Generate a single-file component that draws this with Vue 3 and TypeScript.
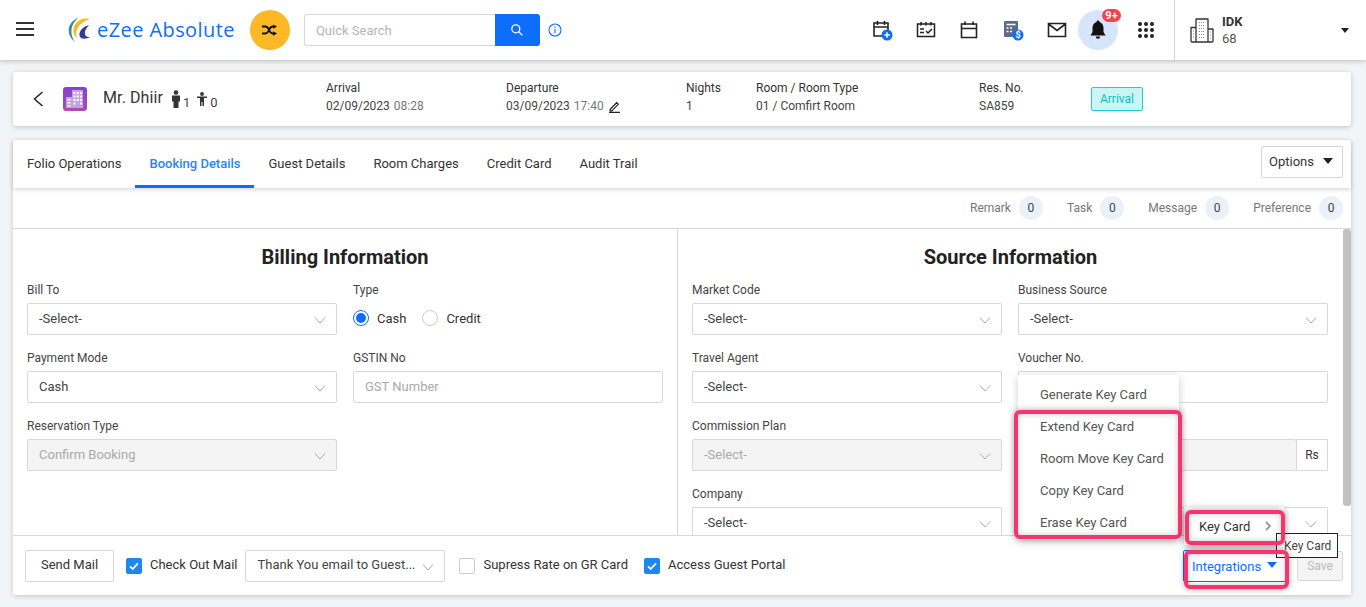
<script setup lang="ts">
const tabs = ['Folio Operations', 'Booking Details', 'Guest Details', 'Room Charges', 'Credit Card', 'Audit Trail']
const counts = ['Remark', 'Task', 'Message', 'Preference']
const keyItems = ['Generate Key Card', 'Extend Key Card', 'Room Move Key Card', 'Copy Key Card', 'Erase Key Card']
</script>

<template>
  <div class="page">
    <header class="topbar">
      <button class="burger"><span></span><span></span><span></span></button>
      <svg class="logo" width="28" height="28" viewBox="0 0 28 28">
        <path d="M12 2C3 5-2 17 9 26 3 18 5 8 12 2Z" fill="#2f8f9d" />
        <path d="M24 3C14 0 5 9 8 18c1 2 2 3 3 4C8 15 13 6 24 3Z" fill="#f7b824" />
        <path d="M23 9c-8 2-12 9-8 13 2 1 6 1 9-1-5 1-8-5-1-12Z" fill="#2f3f8f" />
      </svg>
      <span class="brand">eZee Absolute</span>
      <span class="shuffle">
        <svg width="15" height="12" viewBox="0 0 16 12" fill="#111">
          <path d="M0 2.300h3.500c2 0 3 1.200 4 3.700s2 3.700 4 3.700H13M0 9.700h3.500c2 0 3-1.200 4-3.700s2-3.700 4-3.700H13" fill="none" stroke="#111" stroke-width="2" />
          <path d="m12 0 4 2.300-4 2.300zM12 7.400l4 2.300-4 2.300z" />
        </svg>
      </span>
      <div class="search">
        <input class="search-input" placeholder="Quick Search" />
        <button class="search-btn">
          <svg width="14" height="14" viewBox="0 0 14 14" fill="none" stroke="#fff" stroke-width="1.300"><circle cx="5.800" cy="5.800" r="4" /><path d="m8.800 8.800 3.600 3.600" /></svg>
        </button>
      </div>
      <svg class="info" width="14" height="14" viewBox="0 0 14 14" fill="none" stroke="#0d6efd" stroke-width="1.100"><circle cx="7" cy="7" r="6" /><path d="M7 6v4.200M7 3.600v1.200" /></svg>

      <div class="top-icons">
        <svg class="ti" width="22" height="22" viewBox="0 0 22 22" fill="none" stroke="#222" stroke-width="1.600"><path d="M3 4h14v13H3zM3 8h14M6.500 2v4M13.500 2v4" /><circle cx="16" cy="16" r="5.500" fill="#0d6efd" stroke="none" /><path d="M16 13.200v5.600M13.200 16h5.600" stroke="#fff" stroke-width="1.500" /></svg>
        <svg class="ti" width="20" height="20" viewBox="0 0 20 20" fill="none" stroke="#222" stroke-width="1.500"><path d="M1.500 4h17v12.500h-17zM5 2v3.500M10 2v3.500M15 2v3.500M4 9h4M4 12.500h4M10 11l2 2 4-4" /></svg>
        <svg class="ti" width="20" height="20" viewBox="0 0 20 20" fill="none" stroke="#222" stroke-width="1.600"><path d="M2.500 4h15v13.500h-15zM2.500 8.500h15M6 1.500V5M14 1.500V5" /></svg>
        <svg class="ti" width="22" height="22" viewBox="0 0 22 22"><rect x="2" y="2" width="14" height="16" rx="1" fill="#5b6c8a" /><path d="M4.500 5.500h9M4.500 9h2M8 9h2M4.500 12.500h2M8 12.500h2" stroke="#fff" stroke-width="1.400" /><circle cx="16" cy="16" r="5.500" fill="#0d6efd" /><text x="16" y="19" text-anchor="middle" class="dollar">$</text></svg>
        <svg class="ti" width="20" height="20" viewBox="0 0 20 20" fill="none" stroke="#222" stroke-width="1.600"><path d="M1.500 3.500h17v13h-17zM1.500 4l8.500 6.500L18.500 4" /></svg>
        <span class="bell">
          <svg width="20" height="22" viewBox="0 0 20 22" fill="#111"><path d="M10 1.500c-1 0-1.500.7-1.500 1.600C5.800 4 4.500 6.200 4.500 9v4L2.500 16.500h15L15.500 13V9c0-2.800-1.300-5-4-5.900 0-.9-.5-1.600-1.500-1.600Z" /><path d="M7.800 17.500a2.200 2.200 0 0 0 4.400 0Z" /></svg>
          <b class="badge">9+</b>
        </span>
        <span class="dots"><i v-for="n in 9" :key="n"></i></span>
      </div>

      <div class="hotel">
        <svg width="24" height="26" viewBox="0 0 24 26" fill="none" stroke="#333" stroke-width="1.300"><path d="M1 10.500h5V25H2a1 1 0 0 1-1-1zM6 2h12v23H6zM18 12h5v12a1 1 0 0 1-1 1h-4z" stroke-linejoin="round" /><path d="M9 5.500h6M9 8.500h6M9 11.500h6M9 14.500h6M9 17.500h6M9 20.500h6M3 14h1.500M3 17h1.500M3 20h1.500M20 15h1.500M20 18h1.500M20 21h1.500" stroke="#888" stroke-width="1" stroke-dasharray="1 1" /></svg>
        <div class="hotel-text"><strong>IDK</strong><span>68</span></div>
        <i class="caret dark small"></i>
      </div>
    </header>

    <section class="guest card">
      <svg class="back" width="14" height="18" viewBox="0 0 14 18" fill="none" stroke="#222" stroke-width="1.500"><path d="M11.500 2 3.500 9l8 7" /></svg>
      <span class="room-icon">
        <svg width="24" height="24" viewBox="0 0 24 24">
          <defs><linearGradient id="rg" x1="0" y1="0" x2="0" y2="1"><stop offset="0" stop-color="#8240d2" /><stop offset="1" stop-color="#ab50ab" /></linearGradient></defs>
          <rect width="24" height="24" rx="3" fill="url(#rg)" />
          <path d="M9 3h11v18H9zM3 10h6v11H3z" fill="#c6a0e0" />
          <path d="M10.500 5h2v2h-2zM13.800 5h2v2h-2zM17 5h2v2h-2zM10.500 8.500h2v2h-2zM13.800 8.500h2v2h-2zM17 8.500h2v2h-2zM10.500 12h2v2h-2zM13.800 12h2v2h-2zM17 12h2v2h-2zM10.500 15.500h2v2h-2zM17 15.500h2v2h-2zM4.500 12h3v1.500h-3zM4.500 15h3v1.500h-3zM4.500 18h3v1.500h-3z" fill="#fff" />
        </svg>
      </span>
      <span class="guest-name">Mr. Dhiir</span>
      <span class="pax">
        <svg width="10" height="18" viewBox="0 0 10 18" fill="#333"><circle cx="5" cy="2.500" r="2.300" /><path d="M1 5.500h8v6H7.500V18h-5v-6.500H1z" /></svg><em>1</em>
        <svg class="child" width="10" height="14" viewBox="0 0 10 14" fill="#333"><circle cx="5" cy="2" r="1.900" /><path d="M0 4.500h10v1.600H7v2.400V14H5.500v-4h-1v4H3V6.100H0z" /></svg><em class="zero">0</em>
      </span>
      <div class="meta m-arrival"><label>Arrival</label><p>02/09/2023 <span>08:28</span></p></div>
      <div class="meta m-depart"><label>Departure</label>
        <p>03/09/2023 <span>17:40</span>
          <svg width="13" height="13" viewBox="0 0 12 12" fill="none" stroke="#222" stroke-width="1.100"><path d="M2 8.500 8 2.500l1.500 1.500-6 6H2zM1 11.500h10" /></svg>
        </p>
      </div>
      <div class="meta m-nights"><label>Nights</label><p>1</p></div>
      <div class="meta m-room"><label>Room / Room Type</label><p>01 / Comfirt Room</p></div>
      <div class="meta m-res"><label>Res. No.</label><p>SA859</p></div>
      <span class="status">Arrival</span>
    </section>

    <main class="main card">
      <div class="tabbar">
        <a v-for="t in tabs" :key="t" class="tab" :class="{ active: t === 'Booking Details' }">{{ t }}</a>
        <button class="options"><span>Options</span> <i class="caret dark"></i></button>
      </div>
      <div class="counts">
        <div v-for="c in counts" :key="c" class="count"><span>{{ c }}</span><b>0</b></div>
      </div>

      <div class="content">
        <div class="panel panel-left">
          <h2>Billing Information</h2>
          <div class="grid">
            <div class="field"><label>Bill To</label><div class="select">-Select-<svg class="chev" viewBox="0 0 12 12"><path d="M1 3.500 6 9l5-5.500" /></svg></div></div>
            <div class="field"><label>Type</label>
              <div class="radios">
                <span class="radio on"><i></i></span><span class="rl">Cash</span>
                <span class="radio"></span><span class="rl">Credit</span>
              </div>
            </div>
            <div class="field"><label>Payment Mode</label><div class="select">Cash<svg class="chev" viewBox="0 0 12 12"><path d="M1 3.500 6 9l5-5.500" /></svg></div></div>
            <div class="field"><label>GSTIN No</label><div class="select ph">GST Number</div></div>
            <div class="field"><label>Reservation Type</label><div class="select disabled">Confirm Booking<svg class="chev" viewBox="0 0 12 12"><path d="M1 3.500 6 9l5-5.500" /></svg></div></div>
          </div>
        </div>
        <div class="panel panel-right">
          <h2>Source Information</h2>
          <div class="grid">
            <div class="field"><label>Market Code</label><div class="select">-Select-<svg class="chev" viewBox="0 0 12 12"><path d="M1 3.500 6 9l5-5.500" /></svg></div></div>
            <div class="field"><label>Business Source</label><div class="select">-Select-<svg class="chev" viewBox="0 0 12 12"><path d="M1 3.500 6 9l5-5.500" /></svg></div></div>
            <div class="field"><label>Travel Agent</label><div class="select">-Select-<svg class="chev" viewBox="0 0 12 12"><path d="M1 3.500 6 9l5-5.500" /></svg></div></div>
            <div class="field"><label>Voucher No.</label><div class="select"></div></div>
            <div class="field"><label>Commission Plan</label><div class="select disabled">-Select-<svg class="chev" viewBox="0 0 12 12"><path d="M1 3.500 6 9l5-5.500" /></svg></div></div>
            <div class="field"><label>&nbsp;</label><div class="rate"><div class="select disabled"></div><span class="rs">Rs</span></div></div>
            <div class="field"><label>Company</label><div class="select">-Select-<svg class="chev" viewBox="0 0 12 12"><path d="M1 3.500 6 9l5-5.500" /></svg></div></div>
            <div class="field"><label>&nbsp;</label><div class="select"><svg class="chev" viewBox="0 0 12 12"><path d="M1 3.500 6 9l5-5.500" /></svg></div></div>
          </div>
        </div>
        <div class="scrollbar"><span></span></div>
      </div>

      <footer class="foot">
        <button class="send">Send Mail</button>
        <span class="check on first"><svg viewBox="0 0 16 16" fill="none" stroke="#fff" stroke-width="2"><path d="m3.500 8.500 3 3 6-6.500" /></svg></span>
        <span class="fl">Check Out Mail</span>
        <div class="select mail">Thank You email to Guest...<svg class="chev" viewBox="0 0 12 12"><path d="M1 3.500 6 9l5-5.500" /></svg></div>
        <span class="check second"></span>
        <span class="fl">Supress Rate on GR Card</span>
        <span class="check on third"><svg viewBox="0 0 16 16" fill="none" stroke="#fff" stroke-width="2"><path d="m3.500 8.500 3 3 6-6.500" /></svg></span>
        <span class="fl">Access Guest Portal</span>
        <div class="foot-actions">
          <button class="integrations"><span>Integrations</span> <i class="caret blue"></i></button>
          <button class="save">Save</button>
        </div>
      </footer>
    </main>

    <ul class="keymenu">
      <li v-for="k in keyItems" :key="k">{{ k }}</li>
    </ul>
    <div class="keycard">Key Card<svg width="8" height="10" viewBox="0 0 8 10" fill="none" stroke="#999" stroke-width="1.800"><path d="m2 1 4 4-4 4" /></svg></div>
    <div class="tip">Key Card</div>
    <div class="mark mark-a"></div>
    <div class="mark mark-b"></div>
    <div class="mark mark-c"></div>
  </div>
</template>

<style>
html, body { margin: 0; overflow: hidden; }
</style>

<style scoped>
* { box-sizing: border-box; }
.page { position: relative; width: 1366px; height: 607px; overflow: hidden; background: #f1f5f8; font-family: Roboto, "Liberation Sans", sans-serif; font-size: 13px; color: #333; }
.caret { display: inline-block; width: 0; height: 0; border-left: 5px solid transparent; border-right: 5px solid transparent; border-top: 6px solid #222; }
.caret.small { border-left-width: 4.5px; border-right-width: 4.5px; border-top-width: 5px; }
.caret.blue { border-top-color: #0d6efd; margin-top: -3px; }
.card { background: #fff; border-radius: 3px; box-shadow: 0 1px 5px rgba(0, 0, 0, .2); margin-left: 13px; width: 1338px; }

.topbar { height: 60px; background: #fff; box-shadow: 0 1px 5px rgba(0, 0, 0, .25); display: flex; align-items: center; position: relative; }
.burger { margin: -2px 0 0 16px; width: 18px; height: 14px; padding: 0; border: 0; background: none; display: flex; flex-direction: column; justify-content: space-between; }
.burger span { display: block; height: 2px; background: #333; }
.logo { margin: 0 3px 0 32px; }
.brand { font-size: 20px; color: #0d6efd; letter-spacing: .42px; font-family: "Open Sans", sans-serif; margin-bottom: 2px; }
.shuffle { margin-left: 15px; width: 40px; height: 40px; border-radius: 50%; background: #fdb825; display: flex; align-items: center; justify-content: center; }
.search { margin-left: 14px; display: flex; height: 32px; }
.search-input { width: 191px; height: 32px; border: 1px solid #d8d8d8; border-right: 0; border-radius: 3px 0 0 3px; padding: 0 11px; font: 13px Roboto, sans-serif; outline: none; }
.search-input::placeholder { color: #b5b5b5; }
.search-btn { width: 45px; height: 32px; border: 0; background: #0d6efd; border-radius: 0 3px 3px 0; display: flex; align-items: center; justify-content: center; padding: 0; }
.info { margin-left: 8px; }
.top-icons { margin-left: auto; display: flex; align-items: center; }
.ti { margin-right: 23px; }
.bell { position: relative; width: 40px; height: 40px; border-radius: 50%; background: #d7e5fb; display: flex; align-items: center; justify-content: center; margin-left: -12px; }
.badge { position: absolute; top: -1px; right: -3px; min-width: 19px; height: 13px; border-radius: 7px; background: #f5424d; color: #fff; font-size: 11px; line-height: 13px; text-align: center; font-weight: 700; }
.dots { margin: 0 20px; display: grid; grid-template-columns: repeat(3, 4px); gap: 2px; }
.dots i { width: 4px; height: 4px; background: #222; border-radius: 50%; }
.dollar { font: 700 9px Roboto, sans-serif; fill: #fff; }
.hotel { width: 192px; height: 60px; border-left: 1px solid #d5d5d5; display: flex; align-items: center; padding: 0 17px 0 15px; }
.hotel-text { margin-left: 8px; display: flex; flex-direction: column; line-height: 17px; flex: 1; }
.hotel-text strong { font-size: 13px; font-weight: 700; color: #333; }
.hotel-text span { color: #555; }

.guest { margin-top: 12px; height: 54px; position: relative; display: flex; align-items: center; }
.back { margin-left: 18px; }
.room-icon { margin-left: 18px; height: 24px; }
.guest-name { margin: 0 0 3px 16px; font-size: 16px; letter-spacing: .1px; color: #333; }
.pax { display: flex; align-items: center; margin-left: 8px; margin-top: -1px; }
.pax em { font-style: normal; font-size: 13px; color: #444; margin: 8px 0 0 2px; }
.pax em.zero { margin-left: 3px; }
.child { margin-left: 7px; }
.meta { position: absolute; top: 7px; line-height: 18px; font-size: 12px; }
.meta label { display: block; color: #333; }
.meta p { margin: 0; color: #444; }
.meta p span { color: #777; margin-left: 1px; }
.meta svg { vertical-align: -3px; margin-left: 4px; }
.m-arrival { left: 313px; }
.m-depart { left: 493px; }
.m-nights { left: 673px; }
.m-room { left: 743px; }
.m-res { left: 966px; }
.status { position: absolute; left: 1078px; top: 15px; width: 52px; height: 24px; border: 1px solid #1fd0d0; background: #c9f5f5; color: #14bcc6; border-radius: 2px; font-size: 12px; display: flex; align-items: center; justify-content: center; }

.main { margin-top: 14px; height: 455px; display: flex; flex-direction: column; }
.tabbar { height: 48px; display: flex; align-items: stretch; padding-right: 8px; box-shadow: 0 2px 4px rgba(0, 0, 0, .14); position: relative; flex: none; }
.tab { padding: 0 14px; line-height: 47px; font-size: 13px; color: #333; border-bottom: 3px solid transparent; height: 48px; }
.tab.active { color: #2b84f5; font-weight: 500; border-bottom-color: #0d6efd; margin: 0 1px 0 -1px; padding: 0 13px 0 15px; }
.options { margin: 6px 0 0 auto; width: 82px; height: 32px; background: #fff; border: 1px solid #d5d5d5; border-radius: 2px; font: 13px Roboto, sans-serif; color: #333; display: flex; align-items: center; justify-content: space-between; padding: 0 9px 2px 7px; }
.counts { height: 41px; flex: none; display: flex; justify-content: flex-end; align-items: center; padding: 0 8px 1px 0; border-bottom: 1px solid #d5d5dd; }
.count { display: flex; align-items: center; margin-left: 24px; font-size: 12px; color: #777; }
.count b { margin-left: 8px; width: 24px; height: 24px; border-radius: 50%; background: #eaf1f8; display: flex; align-items: center; justify-content: center; font-weight: 400; color: #444; }

.content { flex: 1; display: flex; overflow: hidden; position: relative; min-height: 0; }
.panel { width: 665px; padding: 14px 14px 0; flex: none; }
.panel-left { border-right: 1px solid #d5d5dd; }
.panel-right { width: 665px; }
h2 { margin: 0 0 9px; text-align: center; font-size: 20px; font-weight: 700; color: #222; line-height: 29px; }
.grid { display: grid; grid-template-columns: 310px 310px; column-gap: 16px; row-gap: 14px; }
.field { height: 54px; }
.field label { display: block; font-size: 12px; line-height: 18px; height: 22px; color: #444; }
.select { position: relative; height: 32px; border: 1px solid #d8d8d8; border-radius: 2px; background: #fff; display: flex; align-items: center; padding: 0 0 2px 11px; font-size: 13px; color: #444; }
.select.ph { color: #aaa; }
.select.disabled { background: #f4f4f4; color: #aaa; }
.chev { position: absolute; right: 10px; top: 10px; width: 12px; height: 12px; fill: none; stroke: #aaa; stroke-width: 1; }
.radios { display: flex; align-items: center; height: 32px; padding-bottom: 2px; }
.radio { width: 16px; height: 16px; border: 1px solid #ccc; border-radius: 50%; display: flex; align-items: center; justify-content: center; margin-right: 8px; }
.radio.on { border-color: #0d6efd; }
.radio.on i { width: 10px; height: 10px; border-radius: 50%; background: #0d6efd; }
.rl { margin-right: 16px; }
.rate { display: flex; }
.rate .select { flex: 1; border-right: 0; }
.rs { width: 32px; height: 32px; border: 1px solid #d8d8d8; display: flex; align-items: center; justify-content: center; font-size: 12px; }
.scrollbar { width: 8px; background: #fff; position: absolute; right: 0; top: 0; bottom: 0; }
.scrollbar span { display: block; width: 8px; height: 277px; background: #c2c2c2; border-radius: 3px; }

.foot { height: 60px; flex: none; border-top: 1px solid #d8d8d8; background: #fff; display: flex; align-items: center; padding: 0 8px 0 12px; position: relative; }
.send { width: 89px; height: 32px; background: #fff; border: 1px solid #d8d8d8; border-radius: 2px; font: 13px Roboto, sans-serif; color: #333; padding: 0 0 2px; }
.check { width: 16px; height: 16px; border: 1px solid #ccc; border-radius: 2px; flex: none; margin-left: 12px; }
.check.second { margin-left: 14px; }
.check.third { margin-left: 16px; }
.check.on { background: #1e86f0; border-color: #1e86f0; }
.check svg { display: block; width: 14px; height: 14px; }
.fl { margin: -2px 0 0 8px; }
.select.mail { width: 200px; margin-left: 8px; flex: none; }
.foot-actions { margin-left: auto; display: flex; align-items: center; }
.integrations { width: 103px; height: 32px; background: #fff; border: 1px solid #0d6efd; border-radius: 2px; color: #0d6efd; font: 13px Roboto, sans-serif; padding: 1px 8px 0; display: flex; align-items: center; justify-content: space-between; }
.save { margin-left: 11px; width: 46px; height: 30px; background: #f4f4f4; border: 1px solid #d8d8d8; border-radius: 2px; color: #bbb; font: 12px Roboto, sans-serif; padding: 0; }

.keymenu { position: absolute; left: 1018px; top: 375px; width: 161px; height: 165px; margin: 0; padding: 4px 0 0; list-style: none; background: #fff; box-shadow: 0 2px 8px rgba(0, 0, 0, .2); }
.keymenu li { height: 32px; line-height: 32px; padding-left: 22px; font-size: 13px; color: #555; }
.keycard { position: absolute; left: 1184px; top: 507px; width: 100px; height: 38px; background: #fff; box-shadow: 0 2px 8px rgba(0, 0, 0, .2); display: flex; align-items: center; justify-content: space-between; padding: 0 12px 0 15px; font-size: 13px; color: #333; }
.tip { position: absolute; left: 1276px; top: 533px; width: 62px; height: 25px; background: #fff; border: 1px solid #222; font-size: 12px; color: #444; line-height: 24px; text-indent: 7px; white-space: nowrap; }
.mark { position: absolute; border: 4px solid #f7346d; border-radius: 6px; box-shadow: 0 0 6px rgba(0, 0, 0, .35), inset 0 0 6px rgba(0, 0, 0, .2); }
.mark-a { left: 1014px; top: 410px; width: 168px; height: 129px; }
.mark-b { left: 1185px; top: 510px; width: 100px; height: 35px; }
.mark-c { left: 1184px; top: 550px; width: 105px; height: 39px; }
</style>
